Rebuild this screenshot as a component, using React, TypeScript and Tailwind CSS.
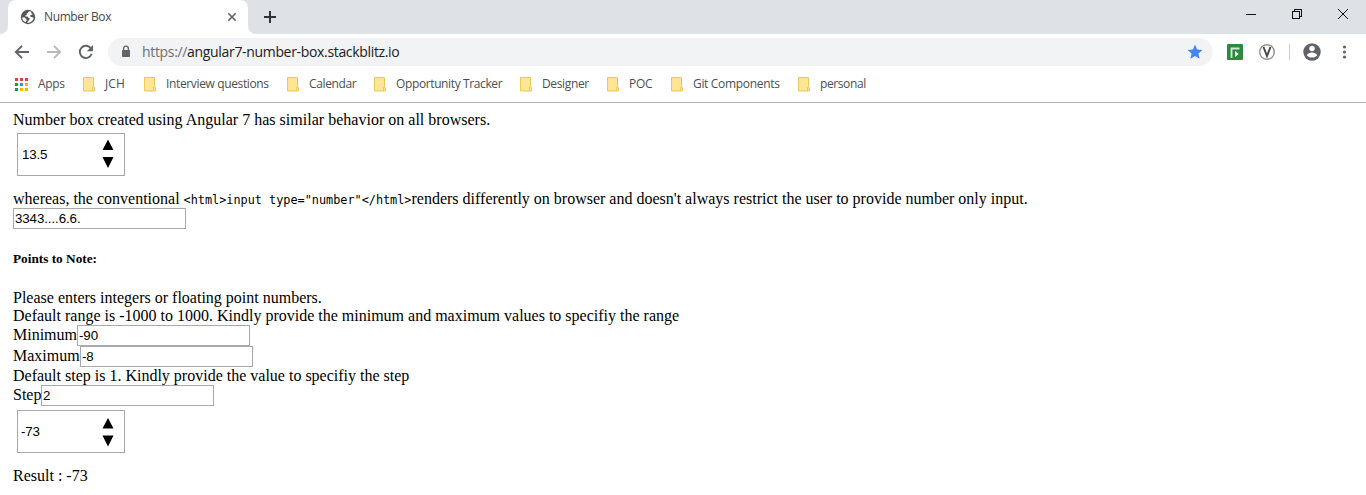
import type { ReactNode } from "react";

const bookmarks = [
  { label: "JCH", cell: "w-[61px]", track: "tracking-[0.1px]" },
  { label: "Interview questions", cell: "w-[143px]", track: "tracking-[-0.36px]" },
  { label: "Calendar", cell: "w-[87px]", track: "tracking-[-0.36px]" },
  { label: "Opportunity Tracker", cell: "w-[146px]", track: "tracking-[-0.38px]" },
  { label: "Designer", cell: "w-[87px]", track: "tracking-[-0.35px]" },
  { label: "POC", cell: "w-[64px]", track: "tracking-[-0.3px]" },
  { label: "Git Components", cell: "w-[127px]", track: "tracking-[-0.32px]" },
  { label: "personal", cell: "w-[90px]", track: "tracking-[-0.4px]" },
];

const appColors = ["#db4437", "#db4437", "#db4437", "#0f9d58", "#4285f4", "#f4b400", "#0f9d58", "#f4b400", "#f4b400"];

function Folder() {
  return (
    <svg width="13" height="15" viewBox="0 0 13 15" className="shrink-0">
      <path d="M.5.5h10v9l1 1.500v3H.5z" fill="#ffe694" stroke="#e8c95c" />
      <path d="M10.500 9.500L9.500 11v3" stroke="#e8c95c" fill="none" />
      <path d="M10 11.500h1v2h-1z" fill="#ffe694" />
    </svg>
  );
}

function TabStrip() {
  return (
    <div className="flex h-[34px] bg-[#dee1e6]">
      <svg width="8" height="34" className="shrink-0"><path d="M8 26a8 8 0 0 1-8 8h8z" fill="#fff" /></svg>
      <div className="flex w-[240px] items-center rounded-t-lg bg-white pl-3 pr-[10px]">
        <svg width="16" height="16" viewBox="0 0 16 16" className="shrink-0">
          <circle cx="8" cy="8" r="7.200" fill="#54585c" />
          <path d="M9.600 2.200C8.500 2.300 8.200 3 8 3.700c-.1.500-1.100.3-1.300.9-.2.500.4.800 0 1.300-.6.500-1.400.3-1.500 1-.1.600.8.600 1.600.6.900 0 1.300.4 1.300 1 .1.700 1.400.3 1.700.9.200.6-.2.900-.7 1.300-.5.400-.3 1.100-.8 1.600-.4.400-1 .6-1 1.500 3.100.200 6.200-2.200 6.400-5.300-.5.300-1 .2-1.300-.2-.4-.5-1.300-.2-1.800-.6-.6-.5-.5-1.400.2-1.700.7-.3 1.300.200 1.700-.400.300-.5-.5-1-1-1.200-.6-.3.100-1.100-.3-1.600-.3-.4-.9-.6-1.600-.6z" fill="#fff" />
          <path d="M2.100 8.600c1-.2 2.400-.2 3.100.1.700.4.300 1.300 1 1.500.8.200.7 1.100.1 1.600-.4.400-.2 1-.4 1.500C3.800 12.600 2.200 10.700 2.100 8.600z" fill="#fff" />
        </svg>
        <span className="ml-2 whitespace-nowrap text-[12px] leading-4 tracking-[-0.38px] text-[#45494d]">Number Box</span>
        <svg width="12" height="12" viewBox="0 0 12 12" className="ml-auto"><path d="M2.300 2.300l7.400 7.400M9.700 2.300l-7.400 7.400" stroke="#5f6368" strokeWidth="1.600" /></svg>
      </div>
      <svg width="8" height="34" className="shrink-0"><path d="M0 26a8 8 0 0 0 8 8H0z" fill="#fff" /></svg>
      <svg width="28" height="34" viewBox="0 0 28 34"><path d="M14 11v12M8 17h12" stroke="#303338" strokeWidth="2" /></svg>
      <svg width="138" height="34" viewBox="0 0 138 34" className="ml-auto" fill="none" stroke="#111" shapeRendering="crispEdges">
        <path d="M18 14.500h10" />
        <path d="M64.500 11.500h7v7h-7zM66.500 11v-1.500h7v7H72" />
        <path d="M110 9l10 10M120 9l-10 10" shapeRendering="auto" />
      </svg>
    </div>
  );
}

function Toolbar() {
  return (
    <div className="flex h-9 items-center bg-white">
      <svg width="108" height="36" viewBox="0 0 108 36" fill="none" stroke="#5f6368" strokeWidth="1.900" className="shrink-0">
        <path d="M29 18H16.500M22 11.800L15.800 18l6.200 6.200" />
        <path d="M47 18h12.500M54 11.800l6.200 6.200-6.200 6.200" stroke="#b7b9bb" />
        <path d="M91 14.500A6.100 6.100 0 1 0 91.700 19.800" />
        <path d="M93 11v6.200h-6.200z" fill="#5f6368" stroke="none" />
      </svg>
      <div className="flex h-7 w-[1105px] shrink-0 items-center rounded-full bg-[#f1f3f4] pl-[13px] pr-[9px]">
        <svg width="10" height="13" viewBox="0 0 10 13" className="mb-px shrink-0"><path d="M1.500 5.500h7v6h-7z" fill="#5f6368" stroke="#5f6368" /><path d="M2.600 5V3.500a2.400 2.400 0 0 1 4.800 0V5" fill="none" stroke="#5f6368" strokeWidth="1.300" /></svg>
        <span className="ml-[11px] whitespace-nowrap text-[14px] leading-5 tracking-[-0.33px] text-[#202124]"><span className="text-[#6d7175]">https://</span>angular7-number-box.stackblitz.io</span>
        <svg width="18" height="18" viewBox="0 0 24 24" className="ml-auto"><path d="M12 17.270L18.180 21l-1.640-7.030L22 9.240l-7.190-.61L12 2 9.190 8.630 2 9.240l5.460 4.730L5.820 21z" fill="#4285f4" /></svg>
      </div>
      <svg width="153" height="36" viewBox="0 0 153 36" className="shrink-0">
        <rect x="14" y="10" width="16" height="16" rx="1" fill="#2b8a3e" />
        <path d="M18.500 24v-9.500h8" fill="none" stroke="#d4ead5" strokeWidth="1.800" />
        <path d="M22 23v-6l3.800 3z" fill="#fff" />
        <circle cx="54" cy="18" r="7.300" fill="#fff" stroke="#929292" strokeWidth="1.400" />
        <path d="M50.500 13l3.500 9 3.500-9" fill="none" stroke="#494949" strokeWidth="2" />
        <path d="M76.500 10v16" stroke="#cbcdd0" />
        <circle cx="99" cy="18" r="8.700" fill="#5f6368" />
        <circle cx="99" cy="14.500" r="2.700" fill="#fff" />
        <path d="M93.800 21.200c1.800-3.600 8.600-3.600 10.400 0-2.300 3.200-8.100 3.200-10.400 0z" fill="#fff" />
        <g fill="#5f6368"><circle cx="131.500" cy="13" r="1.600" /><circle cx="131.500" cy="18" r="1.600" /><circle cx="131.500" cy="23" r="1.600" /></g>
      </svg>
    </div>
  );
}

function BookmarkBar() {
  return (
    <div className="flex h-[33px] items-center border-b border-[#b4b4b4] bg-white pb-1 pl-[15px] text-[12px] text-[#4b4f53]">
      <div className="flex w-[68px] items-center gap-[10px]">
        <svg width="13" height="13" className="shrink-0" shapeRendering="crispEdges">
          {appColors.map((c, i) => (
            <rect key={i} x={(i % 3) * 5} y={Math.floor(i / 3) * 5} width="3" height="3" fill={c} />
          ))}
        </svg>
        <span className="tracking-[-0.3px]">Apps</span>
      </div>
      {bookmarks.map((b) => (
        <div key={b.label} className={`flex shrink-0 items-center gap-[9px] whitespace-nowrap ${b.cell}`}>
          <Folder />
          <span className={b.track}>{b.label}</span>
        </div>
      ))}
    </div>
  );
}

function Line({ children, className = "" }: { children: ReactNode; className?: string }) {
  return <p className={`h-[18px] whitespace-nowrap leading-[18px] ${className}`}>{children}</p>;
}

function TextInput({ value }: { value: string }) {
  return (
    <input
      defaultValue={value}
      className="block h-[21px] w-[173px] border border-[#a9a9a9] bg-white px-px text-[13.333px] leading-[17px] tracking-[-0.1px] text-black outline-none"
    />
  );
}

function NumberBox({ value, pad, arrows }: { value: string; pad: string; arrows: string }) {
  return (
    <div className={`ml-1 flex h-[43px] w-[108px] items-center border border-[#a9a9a9] bg-white pr-[10px] ${pad}`}>
      <input defaultValue={value} className="w-[75px] text-[13.333px] leading-4 tracking-[-0.15px] outline-none" />
      <svg width="12" height="41" viewBox="0 0 12 41" className="ml-auto shrink-0"><path d={arrows} /></svg>
    </div>
  );
}

export default function App() {
  return (
    <div className="h-[495px] w-[1366px] overflow-hidden bg-white font-['Open_Sans',sans-serif]">
      <TabStrip />
      <Toolbar />
      <BookmarkBar />
      <main className="px-[13px] pt-2 font-['Liberation_Serif',serif] text-[16px] text-black [&_input]:font-['Liberation_Sans',sans-serif]">
        <Line className="tracking-[0.012px]">Number box created using Angular 7 has similar behavior on all browsers.</Line>
        <div className="mb-[14px] mt-1"><NumberBox value="13.5" pad="pl-1" arrows="M6 5.500l5.500 10.500H.5zM.5 23h11L6 34z" /></div>
        <Line>
          whereas, the conventional <code className="font-['DejaVu_Sans_Mono',monospace] text-[11.83px] leading-none">{'<html>input type="number"</html>'}</code>renders differently on browser and doesn't always restrict the user to provide number only input.
        </Line>
        <TextInput value="3343....6.6." />
        <h5 className="mb-[22px] mt-[21px] h-[17px] text-[13.28px] font-bold leading-[17px]">Points to Note:</h5>
        <Line>Please enters integers or floating point numbers.</Line>
        <Line>Default range is -1000 to 1000. Kindly provide the minimum and maximum values to specifiy the range</Line>
        <label className="flex"><span className="w-16 leading-[20px]">Minimum</span><TextInput value="-90" /></label>
        <label className="flex"><span className="w-[67px] leading-[20px]">Maximum</span><TextInput value="-8" /></label>
        <Line>Default step is 1. Kindly provide the value to specifiy the step</Line>
        <label className="flex"><span className="w-7 leading-[20px]">Step</span><TextInput value="2" /></label>
        <div className="mb-[14px] mt-1"><NumberBox value="-73" pad="pl-[3px]" arrows="M6 7l5.500 10.500H.5zM.5 24.500h11L6 35.500z" /></div>
        <Line>Result : -73</Line>
      </main>
    </div>
  );
}
